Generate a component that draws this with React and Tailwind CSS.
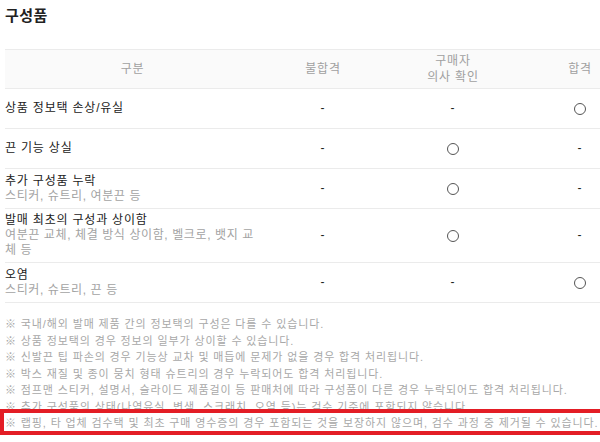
const ROWS = [
  { title: '상품 정보택 손상/유실', sub: null, fail: '-', ask: '-', pass: 'o' },
  { title: '끈 기능 상실', sub: null, fail: '-', ask: 'o', pass: '-' },
  { title: '추가 구성품 누락', sub: '스티커, 슈트리, 여분끈 등', fail: '-', ask: 'o', pass: '-' },
  { title: '발매 최초의 구성과 상이함', sub: '여분끈 교체, 체결 방식 상이함, 벨크로, 뱃지 교체 등', fail: '-', ask: 'o', pass: '-' },
  { title: '오염', sub: '스티커, 슈트리, 끈 등', fail: '-', ask: '-', pass: 'o' },
];

const NOTES = [
  '※ 국내/해외 발매 제품 간의 정보택의 구성은 다를 수 있습니다.',
  '※ 상품 정보택의 경우 정보의 일부가 상이할 수 있습니다.',
  '※ 신발끈 팁 파손의 경우 기능상 교차 및 매듭에 문제가 없을 경우 합격 처리됩니다.',
  '※ 박스 재질 및 종이 뭉치 형태 슈트리의 경우 누락되어도 합격 처리됩니다.',
  '※ 점프맨 스티커, 설명서, 슬라이드 제품걸이 등 판매처에 따라 구성품이 다른 경우 누락되어도 합격 처리됩니다.',
  '※ 추가 구성품의 상태(나염유실, 변색, 스크래치, 오염 등)는 검수 기준에 포함되지 않습니다.',
];

const LAST_NOTE = '※ 랩핑, 타 업체 검수택 및 최초 구매 영수증의 경우 포함되는 것을 보장하지 않으며, 검수 과정 중 제거될 수 있습니다.';

const cols = 'grid grid-cols-[255px_126px_134px_120px]';

// "○" mark, drawn as a ring so it keeps the reference size
function Mark({ v }) {
  if (v === 'o') {
    return <span className="inline-block align-middle w-[12px] h-[12px] rounded-full border border-[#555]" />;
  }
  return <span>{v}</span>;
}

export default function App() {
  return (
    <div className="w-[600px] h-[442px] overflow-hidden bg-white font-['Liberation_Sans','Noto_Sans_CJK_KR',sans-serif] text-[#222]">
      <div className="w-[640px] pl-[5px]">
        {/* Title */}
        <h2 className="pt-[8px] text-[15px] leading-[16px] font-bold tracking-[0.5px] text-[#222]">구성품</h2>

        {/* Table */}
        <div className="mt-[25px] border-t border-[#ebebeb]">
          <div className={`${cols} h-[39px] items-center bg-[#fafafa] border-b border-[#ebebeb] text-[12px] leading-[16px] tracking-[0.8px] text-[#a0a0a0] text-center`}>
            <div>구분</div>
            <div>불합격</div>
            <div>구매자<br />의사 확인</div>
            <div>합격</div>
          </div>

          {ROWS.map((r) => (
            <div key={r.title} className={`${cols} min-h-[40px] items-center py-[4px] border-b border-[#ebebeb] text-[12px] leading-[15px] tracking-[0.8px]`}>
              <div className="break-all">
                <div className="text-[#222]">{r.title}</div>
                {r.sub && <div className="text-[#a3a3a3] tracking-[0.6px]">{r.sub}</div>}
              </div>
              <div className="flex justify-center"><Mark v={r.fail} /></div>
              <div className="flex justify-center"><Mark v={r.ask} /></div>
              <div className="flex justify-center"><Mark v={r.pass} /></div>
            </div>
          ))}
        </div>

        {/* Notes */}
        <div className="mt-[13px] text-[11px] leading-[16.5px] text-[#a8a8a8] tracking-[0.88px] whitespace-nowrap">
          {NOTES.map((n) => (
            <div key={n}>{n}</div>
          ))}
          <div className="relative">
            <div className="absolute top-[-6px] bottom-[-3px] left-[-5px] w-[606px] border-[4px] border-[#e31d25]" />
            {LAST_NOTE}
          </div>
        </div>
      </div>
    </div>
  );
}
